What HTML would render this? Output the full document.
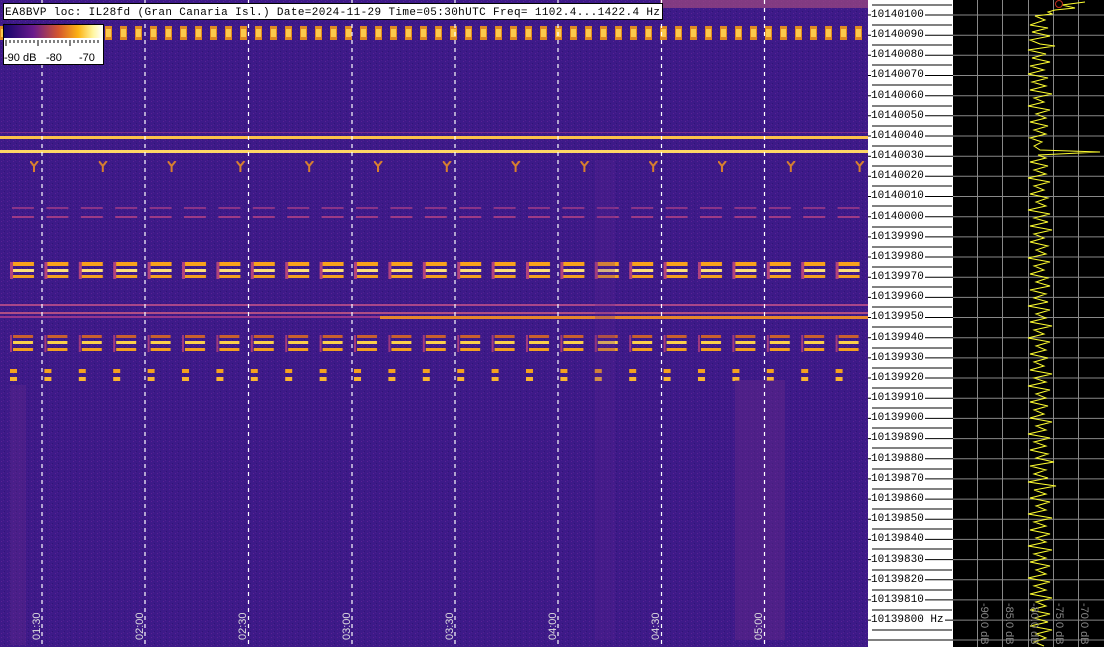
<!DOCTYPE html>
<html><head><meta charset="utf-8"><style>
body{margin:0;width:1104px;height:647px;overflow:hidden;background:#fff;position:relative;font-family:"Liberation Mono",monospace}
.lab{position:absolute;left:871px;font-size:11px;line-height:12px;color:#000;background:#fff;padding-right:1px}
</style></head><body>
<svg width="1104" height="647" style="position:absolute;left:0;top:0">
<defs>
<pattern id="noise" width="6" height="4" patternUnits="userSpaceOnUse">
<rect width="6" height="4" fill="#3d1a88"/><rect x="1" y="1" width="1" height="1" fill="#5a2294"/><rect x="4" y="3" width="1" height="1" fill="#301475"/><rect x="3" y="0" width="1" height="1" fill="#4e1f90"/>
</pattern>
<pattern id="blk" x="10" y="262" width="34.4" height="30" patternUnits="userSpaceOnUse">
<rect x="0" y="0" width="24" height="4" fill="#f9a11c"/><rect x="0" y="7" width="24" height="3" fill="#fde07a"/><rect x="0" y="13" width="24" height="3" fill="#f3a021"/><rect x="0" y="0" width="3" height="17" fill="#b2437c"/>
</pattern>
<pattern id="blk2" x="10" y="335" width="34.4" height="30" patternUnits="userSpaceOnUse">
<rect x="3" y="0" width="20" height="3" fill="#c8602f"/><rect x="3" y="6" width="20" height="3" fill="#fbd04a"/><rect x="3" y="13" width="20" height="3" fill="#f3a021"/><rect x="0" y="-3" width="2" height="20" fill="#a0397d"/>
</pattern>
<pattern id="blk3" x="10" y="369" width="34.4" height="30" patternUnits="userSpaceOnUse">
<rect x="0" y="0" width="7" height="4" fill="#f4a11e"/><rect x="0" y="8" width="7" height="4" fill="#f9b531"/>
</pattern>
<pattern id="blk4" x="12" y="207" width="34.4" height="30" patternUnits="userSpaceOnUse">
<rect x="0" y="0" width="22" height="2" fill="#8a3488"/><rect x="0" y="9" width="22" height="2" fill="#9d3a86"/>
</pattern>
<pattern id="top" x="105" y="26" width="15" height="20" patternUnits="userSpaceOnUse">
<rect x="0" y="0" width="7" height="14" fill="#e08a22"/><rect x="1" y="3" width="5" height="8" fill="#fcc94b"/>
</pattern>
<pattern id="tick" x="30" y="161" width="68.8" height="30" patternUnits="userSpaceOnUse">
<path d="M0 0 L4 5 L8 0 M4 5 V11" stroke="#d9802e" stroke-width="2" fill="none"/>
</pattern>
<linearGradient id="cb" x1="0" x2="1"><stop offset="0" stop-color="#14056a"/><stop offset=".3" stop-color="#6a1b8c"/><stop offset=".55" stop-color="#d4562e"/><stop offset=".75" stop-color="#fcb315"/><stop offset=".9" stop-color="#fff6a0"/><stop offset="1" stop-color="#fff"/></linearGradient>
</defs>
<rect x="0" y="0" width="868" height="647" fill="url(#noise)"/>
<rect x="660" y="0" width="208" height="8" fill="#a04a80" opacity=".7"/>
<rect x="0" y="26" width="868" height="14" fill="url(#top)"/>
<rect x="0" y="136" width="868" height="3" fill="#fbc14a"/>
<rect x="0" y="150" width="868" height="3" fill="#fdd766"/>
<rect x="0" y="132" width="868" height="1" fill="#7a2d8a"/>
<rect x="0" y="161" width="868" height="12" fill="url(#tick)"/>
<rect x="0" y="207" width="868" height="12" fill="url(#blk4)"/>
<rect x="0" y="262" width="868" height="18" fill="url(#blk)"/>
<rect x="0" y="304" width="868" height="2" fill="#a9468a"/>
<rect x="0" y="312" width="868" height="2" fill="#b04e84"/>
<rect x="380" y="316" width="488" height="3" fill="#e4862d"/>
<rect x="0" y="316" width="380" height="2" fill="#96358c"/>
<rect x="0" y="335" width="868" height="17" fill="url(#blk2)"/>
<rect x="0" y="369" width="868" height="14" fill="url(#blk3)"/>
<rect x="735" y="380" width="50" height="260" fill="#6a2a8a" opacity=".4"/>
<rect x="10" y="385" width="16" height="260" fill="#6a2a8a" opacity=".3"/>
<rect x="595" y="160" width="20" height="480" fill="#5a2590" opacity=".25"/>
<g stroke="#fff" stroke-width="1.2" stroke-dasharray="4 4">
<line x1="42" y1="0" x2="42" y2="647"/><line x1="145" y1="0" x2="145" y2="647"/><line x1="248.5" y1="0" x2="248.5" y2="647"/><line x1="352" y1="0" x2="352" y2="647"/><line x1="455" y1="0" x2="455" y2="647"/><line x1="558" y1="0" x2="558" y2="647"/><line x1="661.5" y1="0" x2="661.5" y2="647"/><line x1="764.5" y1="0" x2="764.5" y2="647"/>
</g>
<g fill="#ddd" font-family="Liberation Sans" font-size="11">
<text transform="translate(40,640) rotate(-90)">01:30</text><text transform="translate(143,640) rotate(-90)">02:00</text><text transform="translate(246,640) rotate(-90)">02:30</text><text transform="translate(350,640) rotate(-90)">03:00</text><text transform="translate(453,640) rotate(-90)">03:30</text><text transform="translate(556,640) rotate(-90)">04:00</text><text transform="translate(659,640) rotate(-90)">04:30</text><text transform="translate(762,640) rotate(-90)">05:00</text>
</g>
<rect x="3.5" y="24.5" width="100" height="40" fill="#fff" stroke="#000"/>
<rect x="4" y="25" width="99" height="13" fill="url(#cb)"/>
<path d="M6 40v6M10 40v3M14 40v3M18 40v3M22 40v3M26 40v3M30 40v3M34 40v3M38 40v6M42 40v3M46 40v3M50 40v3M54 40v3M58 40v3M62 40v3M66 40v3M70 40v6M74 40v3M78 40v3M82 40v3M86 40v3M90 40v3M94 40v3M98 40v3" stroke="#000"/>
<text x="4" y="61" font-family="Liberation Sans" font-size="11">-90 dB</text><text x="46" y="61" font-family="Liberation Sans" font-size="11">-80</text><text x="79" y="61" font-family="Liberation Sans" font-size="11">-70</text>
<rect x="3.5" y="3.5" width="659" height="16" fill="#fff" stroke="#000"/>
<text x="5" y="15" font-size="11" font-family="Liberation Mono" textLength="655">EA8BVP loc: IL28fd (Gran Canaria Isl.) Date=2024-11-29 Time=05:30hUTC Freq= 1102.4...1422.4 Hz</text>
<rect x="953" y="0" width="151" height="647" fill="#000"/>
<g stroke="#000" stroke-width="1">
<path d="M868 15h85M868 35.2h85M868 55.3h85M868 75.5h85M868 95.7h85M868 115.8h85M868 136h85M868 156.2h85M868 176.3h85M868 196.5h85M868 216.7h85M868 236.9h85M868 257h85M868 277.2h85M868 297.4h85M868 317.5h85M868 337.7h85M868 357.9h85M868 378h85M868 398.2h85M868 418.4h85M868 438.6h85M868 458.7h85M868 478.9h85M868 499.1h85M868 519.2h85M868 539.4h85M868 559.6h85M868 579.8h85M868 599.9h85M868 620.1h85M868 640h85"/>
<path d="M872 5h80M872 25h80M872 45h80M872 65h80M872 85h80M872 106h80M872 126h80M872 146h80M872 166h80M872 186h80M872 206h80M872 227h80M872 247h80M872 267h80M872 287h80M872 307h80M872 327h80M872 348h80M872 368h80M872 388h80M872 408h80M872 428h80M872 448h80M872 469h80M872 489h80M872 509h80M872 529h80M872 549h80M872 570h80M872 590h80M872 610h80M872 630h80"/>
</g>
<g stroke="#888" stroke-width="1">
<path d="M977.5 0v647M1002.5 0v647M1028.5 0v647M1053.5 0v647M1078.5 0v647"/>
<path d="M953 15h151M953 35.2h151M953 55.3h151M953 75.5h151M953 95.7h151M953 115.8h151M953 136h151M953 156.2h151M953 176.3h151M953 196.5h151M953 216.7h151M953 236.9h151M953 257h151M953 277.2h151M953 297.4h151M953 317.5h151M953 337.7h151M953 357.9h151M953 378h151M953 398.2h151M953 418.4h151M953 438.6h151M953 458.7h151M953 478.9h151M953 499.1h151M953 519.2h151M953 539.4h151M953 559.6h151M953 579.8h151M953 599.9h151M953 620.1h151M953 640h151"/>
</g>
<polyline fill="none" stroke="#ffff30" stroke-width="1" points="1085,2 1062,5 1075,8 1055,10 1048,12 1052,14 1035,16 1045,20 1030,25 1048,28 1032,32 1050,36 1030,40 1040,44 1055,46 1028,50 1046,54 1032,58 1050,62 1030,66 1044,70 1028,74 1048,78 1032,82 1046,86 1030,90 1052,94 1034,98 1044,102 1028,106 1050,110 1036,114 1046,118 1030,122 1048,126 1034,130 1046,134 1030,138 1042,142 1034,146 1040,150 1100,152 1038,155 1046,158 1030,162 1048,166 1034,170 1046,174 1028,178 1050,182 1034,186 1044,190 1030,194 1048,198 1036,202 1046,206 1028,210 1050,214 1034,218 1048,222 1030,226 1052,230 1034,234 1044,238 1030,242 1048,246 1036,250 1046,254 1028,258 1050,262 1034,266 1044,270 1030,274 1048,278 1036,282 1050,286 1030,290 1046,294 1034,298 1048,302 1028,306 1050,310 1036,314 1046,318 1030,322 1052,326 1034,330 1044,334 1028,338 1050,342 1036,346 1046,350 1030,354 1048,358 1034,362 1044,366 1030,370 1052,374 1034,378 1046,382 1028,386 1050,390 1036,394 1046,398 1030,402 1048,406 1034,410 1044,414 1030,418 1052,422 1036,426 1046,430 1028,434 1050,438 1034,442 1046,446 1030,450 1048,454 1036,458 1054,462 1030,466 1046,470 1034,474 1048,478 1028,482 1056,486 1034,490 1046,494 1030,498 1050,502 1036,506 1046,510 1028,514 1052,518 1034,522 1046,526 1030,530 1050,534 1036,538 1046,542 1028,546 1052,550 1034,554 1046,558 1030,562 1050,566 1036,570 1046,574 1028,578 1050,582 1034,586 1046,590 1030,594 1052,598 1036,602 1046,606 1030,610 1050,614 1034,618 1048,622 1030,626 1052,630 1036,634 1046,638 1034,642 1044,646"/>
<circle cx="1059" cy="4" r="3.5" fill="none" stroke="#c03020"/>
<g fill="#888" font-family="Liberation Sans" font-size="11">
<text transform="translate(981,603) rotate(90)">-90.0 dB</text><text transform="translate(1006,603) rotate(90)">-85.0 dB</text><text transform="translate(1031,603) rotate(90)">-80.0 dB</text><text transform="translate(1056,603) rotate(90)">-75.0 dB</text><text transform="translate(1081,603) rotate(90)">-70.0 dB</text>
</g>
</svg>
<div class="lab" style="top:9px">10140100</div><div class="lab" style="top:29px">10140090</div><div class="lab" style="top:49px">10140080</div><div class="lab" style="top:69px">10140070</div><div class="lab" style="top:90px">10140060</div><div class="lab" style="top:110px">10140050</div><div class="lab" style="top:130px">10140040</div><div class="lab" style="top:150px">10140030</div><div class="lab" style="top:170px">10140020</div><div class="lab" style="top:190px">10140010</div><div class="lab" style="top:211px">10140000</div><div class="lab" style="top:231px">10139990</div><div class="lab" style="top:251px">10139980</div><div class="lab" style="top:271px">10139970</div><div class="lab" style="top:291px">10139960</div><div class="lab" style="top:311px">10139950</div><div class="lab" style="top:332px">10139940</div><div class="lab" style="top:352px">10139930</div><div class="lab" style="top:372px">10139920</div><div class="lab" style="top:392px">10139910</div><div class="lab" style="top:412px">10139900</div><div class="lab" style="top:432px">10139890</div><div class="lab" style="top:453px">10139880</div><div class="lab" style="top:473px">10139870</div><div class="lab" style="top:493px">10139860</div><div class="lab" style="top:513px">10139850</div><div class="lab" style="top:533px">10139840</div><div class="lab" style="top:554px">10139830</div><div class="lab" style="top:574px">10139820</div><div class="lab" style="top:594px">10139810</div><div class="lab" style="top:614px">10139800 Hz</div>
</body></html>
